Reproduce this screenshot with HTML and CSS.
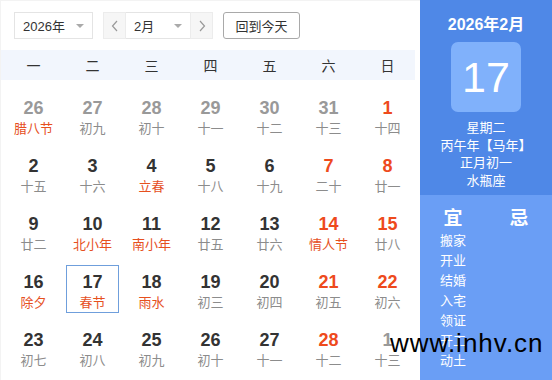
FILE: index.html
```html
<!DOCTYPE html>
<html lang="zh-CN">
<head>
  <meta charset="UTF-8">
  <meta name="viewport" content="width=device-width, initial-scale=1.0">
  <link rel="stylesheet" href="styles.css">
  <title>万年历</title>
</head>
<body>
  <div class="calendar">
    <div class="main_panel">
      <div class="toolbar">
        <div class="select year_select">
          <span>2026年</span>
          <span class="caret"></span>
        </div>
        <div class="month_group">
          <div class="nav_btn">
            <svg width="8" height="12" viewBox="0 0 8 12"><polyline points="6,1 1.5,6 6,11" fill="none" stroke="#999" stroke-width="1.2"/></svg>
          </div>
          <div class="select month_select">
            <span>2月</span>
            <span class="caret"></span>
          </div>
          <div class="nav_btn">
            <svg width="8" height="12" viewBox="0 0 8 12"><polyline points="2,1 6.5,6 2,11" fill="none" stroke="#999" stroke-width="1.2"/></svg>
          </div>
        </div>
        <div class="today_btn">回到今天</div>
      </div>

      <div class="week_head">
        <span>一</span><span>二</span><span>三</span><span>四</span><span>五</span><span>六</span><span>日</span>
      </div>

      <div class="days">
        <!-- row 1 -->
        <div class="day other"><b>26</b><i class="fest">腊八节</i></div>
        <div class="day other"><b>27</b><i>初九</i></div>
        <div class="day other"><b>28</b><i>初十</i></div>
        <div class="day other"><b>29</b><i>十一</i></div>
        <div class="day other"><b>30</b><i>十二</i></div>
        <div class="day other"><b>31</b><i>十三</i></div>
        <div class="day weekend"><b>1</b><i>十四</i></div>
        <!-- row 2 -->
        <div class="day"><b>2</b><i>十五</i></div>
        <div class="day"><b>3</b><i>十六</i></div>
        <div class="day"><b>4</b><i class="fest">立春</i></div>
        <div class="day"><b>5</b><i>十八</i></div>
        <div class="day"><b>6</b><i>十九</i></div>
        <div class="day weekend"><b>7</b><i>二十</i></div>
        <div class="day weekend"><b>8</b><i>廿一</i></div>
        <!-- row 3 -->
        <div class="day"><b>9</b><i>廿二</i></div>
        <div class="day"><b>10</b><i class="fest">北小年</i></div>
        <div class="day"><b>11</b><i class="fest">南小年</i></div>
        <div class="day"><b>12</b><i>廿五</i></div>
        <div class="day"><b>13</b><i>廿六</i></div>
        <div class="day weekend"><b>14</b><i class="fest">情人节</i></div>
        <div class="day weekend"><b>15</b><i>廿八</i></div>
        <!-- row 4 -->
        <div class="day"><b>16</b><i class="fest">除夕</i></div>
        <div class="day today"><b>17</b><i class="fest">春节</i></div>
        <div class="day"><b>18</b><i class="fest">雨水</i></div>
        <div class="day"><b>19</b><i>初三</i></div>
        <div class="day"><b>20</b><i>初四</i></div>
        <div class="day weekend"><b>21</b><i>初五</i></div>
        <div class="day weekend"><b>22</b><i>初六</i></div>
        <!-- row 5 -->
        <div class="day"><b>23</b><i>初七</i></div>
        <div class="day"><b>24</b><i>初八</i></div>
        <div class="day"><b>25</b><i>初九</i></div>
        <div class="day"><b>26</b><i>初十</i></div>
        <div class="day"><b>27</b><i>十一</i></div>
        <div class="day weekend"><b>28</b><i>十二</i></div>
        <div class="day other"><b>1</b><i>十三</i></div>
      </div>
    </div>

    <div class="side_panel">
      <div class="side_top">
        <p class="side_month">2026年2月</p>
        <div class="big_day">17</div>
        <div class="side_info">
          <p>星期二</p>
          <p>丙午年【马年】</p>
          <p>正月初一</p>
          <p>水瓶座</p>
        </div>
      </div>
      <div class="side_bottom">
        <div class="yiji_col">
          <p class="yiji_title">宜</p>
          <p>搬家</p>
          <p>开业</p>
          <p>结婚</p>
          <p>入宅</p>
          <p>领证</p>
          <p>开工</p>
          <p>动土</p>
        </div>
        <div class="yiji_col">
          <p class="yiji_title">忌</p>
        </div>
      </div>
    </div>

    <div class="watermark">www.inhv.cn</div>
  </div>
</body>
</html>
```

FILE: styles.css
```css
/* Basics */
* {
  box-sizing: border-box;
}

body {
  margin: 0;
  font-family: "Liberation Sans", "Noto Sans CJK SC", sans-serif;
  background-color: #ffffff;
  color: #333333;
}

p {
  margin: 0;
}

.calendar {
  position: relative;
  display: flex;
  width: 552px;
  height: 380px;
  overflow: hidden;
}

/* Left panel */
.main_panel {
  width: 420px;
  height: 380px;
  border-top: 1px solid #f3f3f3;
  border-left: 1px solid #f3f3f3;
}

.toolbar {
  display: flex;
  align-items: center;
  height: 49px;
  padding: 0 0 0 13px;
  gap: 10px;
}

.select {
  display: flex;
  align-items: center;
  justify-content: space-between;
  height: 27px;
  padding: 0 8px 0 8px;
  border: 1px solid #e4e4e4;
  background-color: #ffffff;
  font-size: 13px;
  color: #333333;
}

.year_select {
  width: 79px;
}

.month_select {
  width: 64px;
  border-left: none;
  border-right: none;
}

.caret {
  width: 0;
  height: 0;
  border-left: 4px solid transparent;
  border-right: 4px solid transparent;
  border-top: 4px solid #aaaaaa;
}

.month_group {
  display: flex;
}

.nav_btn {
  display: flex;
  align-items: center;
  justify-content: center;
  width: 23px;
  height: 27px;
  border: 1px solid #ececec;
  background-color: #f6f6f6;
}

.today_btn {
  display: flex;
  align-items: center;
  justify-content: center;
  width: 77px;
  height: 27px;
  border: 1px solid #a9a9a9;
  border-radius: 3px;
  font-size: 13px;
  color: #333333;
}

/* Week header */
.week_head {
  display: grid;
  grid-template-columns: repeat(7, 59px);
  align-items: center;
  width: 414px;
  height: 30px;
  padding-left: 3px;
  background-color: #f2f6fd;
  font-size: 14px;
  color: #333333;
}

.week_head span {
  text-align: center;
}

/* Days */
.days {
  display: grid;
  grid-template-columns: repeat(7, 59px);
  grid-auto-rows: 58px;
  padding: 6px 0 0 3px;
}

.day {
  margin: 5px 3px;
  padding-top: 5px;
  text-align: center;
  border: 1px solid transparent;
}

.day b {
  display: block;
  height: 22px;
  line-height: 22px;
  font-size: 18px;
  font-weight: bold;
  color: #333333;
}

.day i {
  display: block;
  height: 20px;
  line-height: 20px;
  font-style: normal;
  font-size: 13px;
  color: #8c8c8c;
}

.day.other b {
  color: #999999;
}

.day.weekend b {
  color: #ee4a1c;
}

.day i.fest {
  color: #e6501e;
}

.day.today {
  border-color: #6f9fdc;
}

/* Right panel */
.side_panel {
  width: 132px;
  display: flex;
  flex-direction: column;
  color: #ffffff;
}

.side_top {
  display: flex;
  flex-direction: column;
  align-items: center;
  height: 195px;
  padding-top: 14px;
  background-color: #4f88e7;
}

.side_month {
  font-size: 16px;
  font-weight: bold;
  line-height: 22px;
}

.big_day {
  display: flex;
  align-items: center;
  justify-content: center;
  width: 70px;
  height: 70px;
  margin-top: 6px;
  border-radius: 7px;
  background-color: #80b1fb;
  font-size: 43px;
}

.side_info {
  margin-top: 7px;
  text-align: center;
  font-size: 13px;
  line-height: 17.5px;
}

.side_bottom {
  display: flex;
  flex: 1;
  padding-top: 12px;
  background-color: #6a9ef5;
}

.yiji_col {
  width: 66px;
  text-align: center;
  font-size: 13px;
  line-height: 20px;
}

.yiji_title {
  font-size: 19px;
  font-weight: bold;
  line-height: 24px;
}

/* Watermark */
.watermark {
  position: absolute;
  left: 390px;
  top: 328px;
  font-size: 26px;
  line-height: 30px;
  letter-spacing: 1px;
  color: #000000;
}
```
